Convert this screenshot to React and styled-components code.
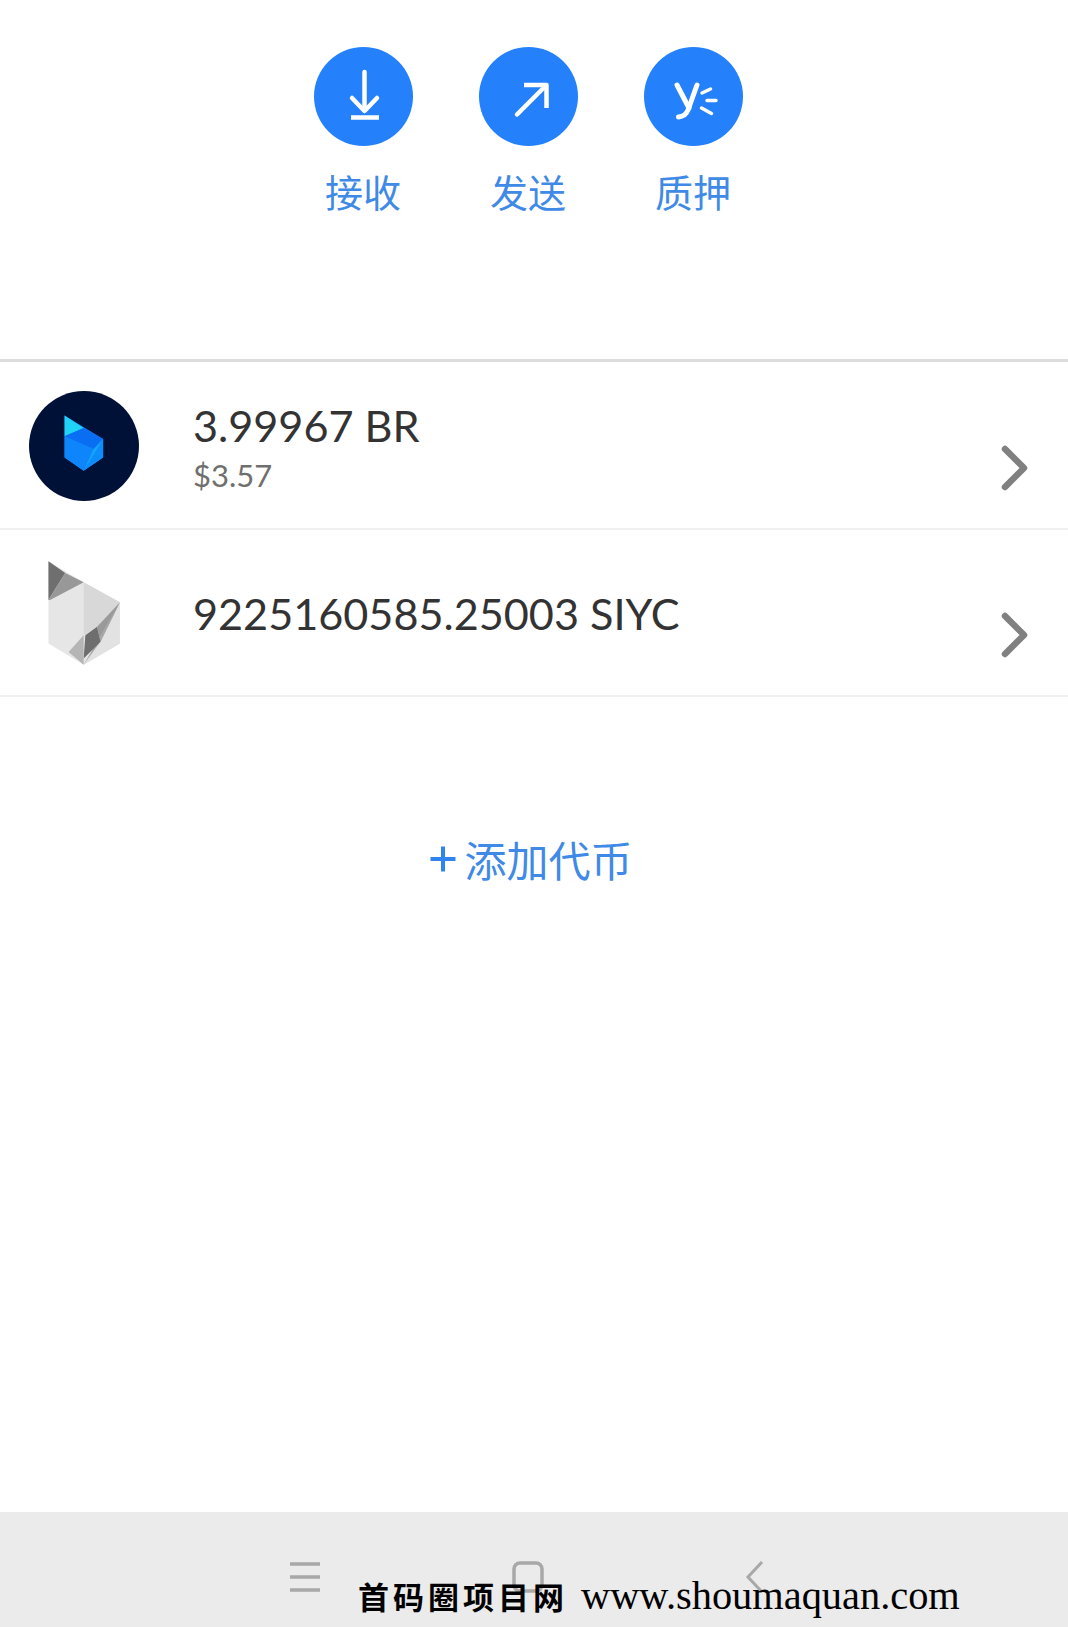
import React from "react";
import styled, { createGlobalStyle } from "styled-components";

const GlobalStyle = createGlobalStyle`
  html, body { margin: 0; padding: 0; background: #fff; }
  body { font-family: "Lato", "Noto Sans CJK SC", sans-serif; }
`;

const Page = styled.div`
  width: 1068px;
  height: 1627px;
  display: flex;
  flex-direction: column;
  overflow: hidden;
`;

const Actions = styled.div`
  height: 362px;
  padding: 47px 12px 0 0;
  box-sizing: border-box;
  display: flex;
  justify-content: center;
  gap: 66px;
  border-bottom: 3px solid #dcdcdc;
`;

const Action = styled.div`
  width: 99px;
  display: flex;
  flex-direction: column;
  align-items: center;
  gap: 22px;
`;

const ActionCircle = styled.div`
  width: 99px;
  height: 99px;
  border-radius: 50%;
  background: #2480fb;
  display: flex;
  align-items: center;
  justify-content: center;
`;

const ActionLabel = styled.span`
  font-family: "Noto Sans CJK SC", sans-serif;
  font-size: 38px;
  line-height: 46px;
  color: #3f8ae6;
  white-space: nowrap;
`;

const Row = styled.div`
  height: ${(p) => p.$height}px;
  box-sizing: border-box;
  display: flex;
  align-items: center;
  padding-left: 29px;
  border-bottom: 2px solid #f0f0f0;
`;

const CoinSlot = styled.div`
  width: 110px;
  height: 110px;
  margin-top: ${(p) => p.$offset}px;
  flex: none;
`;

const RowText = styled.div`
  margin-left: 54px;
  display: flex;
  flex-direction: column;
  margin-top: ${(p) => p.$offset}px;
`;

const Amount = styled.span`
  font-family: "Lato", sans-serif;
  font-size: 43.2px;
  line-height: 50px;
  color: #333;
`;

const Fiat = styled.span`
  font-family: "Lato", sans-serif;
  font-size: 31px;
  line-height: 40px;
  margin-top: 5px;
  color: #6f6f6f;
`;

const Chevron = styled.svg`
  margin-left: auto;
  margin-right: 39px;
  margin-top: ${(p) => p.$offset}px;
  flex: none;
`;

const AddToken = styled.div`
  margin-top: 137px;
  display: flex;
  justify-content: center;
  align-items: center;
  gap: 8px;
  padding-right: 5px;
  font-family: "Noto Sans CJK SC", sans-serif;
  font-size: 42px;
  line-height: 50px;
  color: #3f8ae6;
`;

const NavBar = styled.div`
  margin-top: auto;
  height: 115px;
  background: #ebebeb;
  position: relative;
`;

const NavIcon = styled.svg`
  position: absolute;
  top: 49px;
  left: ${(p) => p.$x}px;
`;

const Watermark = styled.div`
  position: absolute;
  left: 358px;
  top: 60px;
  display: flex;
  align-items: baseline;
  gap: 13px;
  color: #000;
  white-space: nowrap;
`;

const WatermarkCjk = styled.span`
  font-family: "Noto Sans CJK SC", serif;
  font-weight: 700;
  font-size: 31px;
  letter-spacing: 4px;
`;

const WatermarkLatin = styled.span`
  font-family: "Liberation Serif", serif;
  font-size: 40.4px;
`;

const white = { stroke: "#fff", fill: "none", strokeWidth: 4.5, strokeLinecap: "round", strokeLinejoin: "round" };

const ReceiveIcon = () => (
  <svg width="99" height="99" viewBox="0 0 99 99">
    <g {...white}>
      <path d="M50.500 25v38" />
      <path d="M38 51l12.500 13L63 51" />
      <path d="M37 70.500h28" strokeLinecap="butt" />
    </g>
  </svg>
);

const SendIcon = () => (
  <svg width="99" height="99" viewBox="0 0 99 99">
    <g {...white}>
      <path d="M38 67.500l29-29" />
      <path d="M45 38h22.500v23" strokeLinecap="butt" />
    </g>
  </svg>
);

const StakeIcon = () => (
  <svg width="99" height="99" viewBox="0 0 99 99">
    <g {...white}>
      <path d="M33 38l12 23" strokeWidth="5" />
      <path d="M53 38L44 63c-1.500 4-4 6.500-9.500 7" strokeWidth="5" />
      <path d="M58 46l8.500-4M63 53.500h9M57.500 61l10 5.500" strokeWidth="3.500" />
    </g>
  </svg>
);

const BrCoin = () => (
  <svg width="110" height="110" viewBox="87 122 328 328">
    <circle cx="251" cy="286" r="164" fill="#001138" />
    <polygon points="193,195 308,265 308,320 250,360 193,320" fill="#0d80fb" />
    <polygon points="193,195 250,232 193,257" fill="#20d2f5" />
    <polygon points="193,257 250,232 308,265 280,295" fill="#0a6ef2" />
    <polygon points="193,257 280,295 250,360 193,320" fill="#0e85fb" />
    <polygon points="308,265 250,360 308,320" fill="#0c8dfb" />
    <polygon points="308,265 280,295 250,360" fill="#14a8fb" />
  </svg>
);

const SiycCoin = () => (
  <svg width="110" height="110" viewBox="87 625 328 328">
    <polygon points="145,635 250,697 358,757 358,880 250,943 145,880" fill="#e6e6e6" />
    <polygon points="250,697 358,757 290,830 250,855" fill="#d8d8d8" />
    <polygon points="358,757 358,880 250,943" fill="#e2e2e2" />
    <polygon points="145,635 195,670 145,750" fill="#6f6f6f" />
    <polygon points="195,670 250,697 150,750 145,750" fill="#989898" />
    <polygon points="290,830 358,757 300,875" fill="#9a9a9a" />
    <polygon points="300,875 358,757 250,943" fill="#a8a8a8" />
    <polygon points="255,855 290,830 300,875 250,925" fill="#6e6e6e" />
    <polygon points="205,905 250,855 250,943" fill="#b5b5b5" />
  </svg>
);

const RowChevron = ({ offset }) => (
  <Chevron $offset={offset} width="28" height="46" viewBox="0 0 28 46">
    <path d="M4 4l19 19L4 42" fill="none" stroke="#808080" strokeWidth="6.500" strokeLinecap="round" strokeLinejoin="round" />
  </Chevron>
);

const PlusIcon = () => (
  <svg width="26" height="26" viewBox="0 0 26 26">
    <path d="M0.500 13h25M13 0.500v25" stroke="#2f84ee" strokeWidth="4" />
  </svg>
);

const actions = [
  { label: "接收", icon: <ReceiveIcon /> },
  { label: "发送", icon: <SendIcon /> },
  { label: "质押", icon: <StakeIcon /> },
];

export default function App() {
  return (
    <Page>
      <GlobalStyle />
      <Actions>
        {actions.map((a) => (
          <Action key={a.label}>
            <ActionCircle>{a.icon}</ActionCircle>
            <ActionLabel>{a.label}</ActionLabel>
          </Action>
        ))}
      </Actions>
      <Row $height={168}>
        <CoinSlot $offset={1}><BrCoin /></CoinSlot>
        <RowText $offset={4}>
          <Amount>3.99967 BR</Amount>
          <Fiat>$3.57</Fiat>
        </RowText>
        <RowChevron offset={45} />
      </Row>
      <Row $height={167}>
        <CoinSlot $offset={0}><SiycCoin /></CoinSlot>
        <RowText $offset={0}>
          <Amount>9225160585.25003 SIYC</Amount>
        </RowText>
        <RowChevron offset={44} />
      </Row>
      <AddToken>
        <PlusIcon />
        <span>添加代币</span>
      </AddToken>
      <NavBar>
        <NavIcon $x={290} width="30" height="32" viewBox="0 0 30 32">
          <path d="M0 3h30M0 16h30M0 29h30" stroke="#a8a8a8" strokeWidth="3.500" />
        </NavIcon>
        <NavIcon $x={512} width="32" height="32" viewBox="0 0 32 32">
          <rect x="2" y="2" width="28" height="28" rx="6" fill="none" stroke="#a8a8a8" strokeWidth="3.500" />
        </NavIcon>
        <NavIcon $x={745} width="20" height="32" viewBox="0 0 20 32">
          <path d="M17 1L3 16l14 15" fill="none" stroke="#a8a8a8" strokeWidth="3" />
        </NavIcon>
        <Watermark>
          <WatermarkCjk>首码圈项目网</WatermarkCjk>
          <WatermarkLatin>www.shoumaquan.com</WatermarkLatin>
        </Watermark>
      </NavBar>
    </Page>
  );
}
